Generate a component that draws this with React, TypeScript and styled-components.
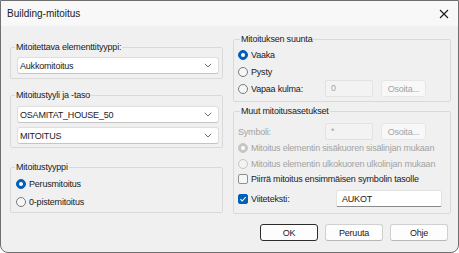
import styled, { createGlobalStyle } from 'styled-components';

const GlobalStyle = createGlobalStyle`
    html, body {
        margin: 0;
        padding: 0;
        background: #ffffff;
    }
    * {
        box-sizing: border-box;
    }
`;

const font = `'Liberation Sans', Arial, sans-serif`;

const Chevron = () => (
    <svg width="8" height="5" viewBox="0 0 8 5">
        <path d="M0.8 0.8 L4 4 L7.2 0.8" fill="none" stroke="#5f5f5f" strokeWidth="0.9" />
    </svg>
);

const CloseIcon = () => (
    <svg width="10" height="10" viewBox="0 0 10 10">
        <path d="M1 1 L9 9 M9 1 L1 9" stroke="#1a1a1a" strokeWidth="1.1" />
    </svg>
);

const CheckMark = () => (
    <svg width="8" height="8" viewBox="0 0 8 8">
        <path d="M1.4 4.2 L3.2 6 L6.8 2" fill="none" stroke="#ffffff" strokeWidth="1.1" />
    </svg>
);

const App = () => {
    return (
        <>
            <GlobalStyle />
            <Window>
                <TitleBar>
                    <Title>Building-mitoitus</Title>
                    <CloseButton>
                        <CloseIcon />
                    </CloseButton>
                </TitleBar>
                <Body>
                    <LeftColumn>
                        <Group $pt={3} $pb={4}>
                            <Legend>Mitoitettava elementtityyppi:</Legend>
                            <Combo>
                                <span>Aukkomitoitus</span>
                                <Chevron />
                            </Combo>
                        </Group>
                        <Group $pt={4} $pb={3} $mt={9}>
                            <Legend>Mitoitustyyli ja -taso</Legend>
                            <ComboStack>
                                <Combo>
                                    <span>OSAMITAT_HOUSE_50</span>
                                    <Chevron />
                                </Combo>
                                <Combo>
                                    <span>MITOITUS</span>
                                    <Chevron />
                                </Combo>
                            </ComboStack>
                        </Group>
                        <Group $pt={1} $pb={1} $mt={12}>
                            <Legend>Mitoitustyyppi</Legend>
                            <OptionRow $h={18} $indent={-1}>
                                <Radio $checked />
                                <OptionLabel>Perusmitoitus</OptionLabel>
                            </OptionRow>
                            <OptionRow $h={18} $indent={-1}>
                                <Radio />
                                <OptionLabel>0-pistemitoitus</OptionLabel>
                            </OptionRow>
                        </Group>
                    </LeftColumn>
                    <RightColumn>
                        <Group $pt={0} $pb={4} $pl={4}>
                            <Legend $ml={2}>Mitoituksen suunta</Legend>
                            <OptionRow $h={17}>
                                <Radio $checked />
                                <OptionLabel>Vaaka</OptionLabel>
                            </OptionRow>
                            <OptionRow $h={17}>
                                <Radio />
                                <OptionLabel>Pysty</OptionLabel>
                            </OptionRow>
                            <FieldRow>
                                <OptionRow $h={17}>
                                    <Radio />
                                    <OptionLabel>Vapaa kulma:</OptionLabel>
                                </OptionRow>
                                <TextBox $disabled>0</TextBox>
                                <PickButton>Osoita...</PickButton>
                            </FieldRow>
                        </Group>
                        <Group $pt={5} $pb={6} $pl={4} $mt={2}>
                            <Legend $ml={2}>Muut mitoitusasetukset</Legend>
                            <FieldRow>
                                <OptionLabel $disabled>Symboli:</OptionLabel>
                                <TextBox $disabled>*</TextBox>
                                <PickButton>Osoita...</PickButton>
                            </FieldRow>
                            <OptionRow $h={16}>
                                <Radio $checked $disabled />
                                <OptionLabel $disabled>
                                    Mitoitus elementin sisäkuoren sisälinjan mukaan
                                </OptionLabel>
                            </OptionRow>
                            <OptionRow $h={16}>
                                <Radio $disabled />
                                <OptionLabel $disabled>
                                    Mitoitus elementin ulkokuoren ulkolinjan mukaan
                                </OptionLabel>
                            </OptionRow>
                            <OptionRow $h={14}>
                                <CheckBox />
                                <OptionLabel>
                                    Piirrä mitoitus ensimmäisen symbolin tasolle
                                </OptionLabel>
                            </OptionRow>
                            <ReferenceRow>
                                <OptionRow $h={17}>
                                    <CheckBox $checked>
                                        <CheckMark />
                                    </CheckBox>
                                    <OptionLabel>Viiteteksti:</OptionLabel>
                                </OptionRow>
                                <TextBox $wide>AUKOT</TextBox>
                            </ReferenceRow>
                        </Group>
                        <ButtonRow>
                            <DialogButton $default>OK</DialogButton>
                            <DialogButton>Peruuta</DialogButton>
                            <DialogButton>Ohje</DialogButton>
                        </ButtonRow>
                    </RightColumn>
                </Body>
            </Window>
        </>
    );
};

export default App;

const Window = styled.div`
    width: 459px;
    height: 253px;
    display: flex;
    flex-direction: column;
    border: 1px solid #6f6f6f;
    border-radius: 0 0 8px 8px;
    overflow: hidden;
    background: #f0f0f0;
    font-family: ${font};
    color: #1a1a1a;
    letter-spacing: -0.2px;
`;

const TitleBar = styled.div`
    height: 25px;
    flex-shrink: 0;
    display: flex;
    align-items: center;
    justify-content: space-between;
    padding: 0 8px 0 6px;
    background: #f8f8f8;
`;

const Title = styled.span`
    font-size: 10px;
    line-height: 12px;
    letter-spacing: 0;
`;

const CloseButton = styled.span`
    display: flex;
    align-items: center;
    justify-content: center;
    width: 12px;
    height: 12px;
`;

const Body = styled.div`
    flex: 1;
    display: grid;
    grid-template-columns: 213px 218px;
    column-gap: 10px;
    padding: 6px 7px 0 9px;
`;

const LeftColumn = styled.div`
    display: flex;
    flex-direction: column;
    padding-top: 8px;
`;

const RightColumn = styled.div`
    display: flex;
    flex-direction: column;
`;

const Group = styled.fieldset<{ $pt: number; $pb: number; $pl?: number; $mt?: number }>`
    margin: ${({ $mt }) => $mt ?? 0}px 0 0 0;
    padding: ${({ $pt }) => $pt}px 3px ${({ $pb }) => $pb}px
        ${({ $pl }) => $pl ?? 6}px;
    border: 1px solid #d9d9d9;
    border-radius: 2px;
    min-width: 0;
`;

const Legend = styled.legend<{ $ml?: number }>`
    font-size: 9px;
    line-height: 14px;
    padding: 0 1px;
    margin-left: ${({ $ml }) => $ml ?? -2}px;
    color: #1a1a1a;
`;

const ComboStack = styled.div`
    display: flex;
    flex-direction: column;
    gap: 4px;
`;

const Combo = styled.div`
    height: 17px;
    display: flex;
    align-items: center;
    justify-content: space-between;
    padding: 0 6px 0 2px;
    background: #ffffff;
    border: 1px solid #dedede;
    border-bottom-color: #c4c4c4;
    border-radius: 3px;
    font-size: 9px;
`;

const OptionRow = styled.div<{ $h: number; $indent?: number }>`
    height: ${({ $h }) => $h}px;
    display: flex;
    align-items: center;
    gap: 3px;
    margin-left: ${({ $indent }) => $indent ?? 0}px;
`;

const OptionLabel = styled.span<{ $disabled?: boolean }>`
    font-size: 9px;
    white-space: nowrap;
    color: ${({ $disabled }) => ($disabled ? '#a3a3a3' : '#1a1a1a')};
`;

const Radio = styled.span<{ $checked?: boolean; $disabled?: boolean }>`
    position: relative;
    flex-shrink: 0;
    width: 10px;
    height: 10px;
    border-radius: 50%;
    border: 1px solid
        ${({ $checked, $disabled }) =>
            $disabled ? '#c6c6c6' : $checked ? '#005fb8' : '#7a7a7a'};
    background: ${({ $checked, $disabled }) =>
        $checked ? ($disabled ? '#c6c6c6' : '#005fb8') : $disabled ? '#f3f3f3' : '#f6f6f6'};

    &::after {
        content: '';
        display: ${({ $checked }) => ($checked ? 'block' : 'none')};
        position: absolute;
        left: 2px;
        top: 2px;
        width: 4px;
        height: 4px;
        border-radius: 50%;
        background: #ffffff;
    }
`;

const CheckBox = styled.span<{ $checked?: boolean }>`
    flex-shrink: 0;
    width: 10px;
    height: 10px;
    display: flex;
    align-items: center;
    justify-content: center;
    border-radius: 2px;
    border: 1px solid ${({ $checked }) => ($checked ? '#005fb8' : '#8f8f8f')};
    background: ${({ $checked }) => ($checked ? '#005fb8' : '#f6f6f6')};
`;

const FieldRow = styled.div`
    display: grid;
    grid-template-columns: 79px 48px 45px;
    column-gap: 8px;
    align-items: center;
    height: 17px;
`;

const ReferenceRow = styled.div`
    display: grid;
    grid-template-columns: 98px 106px;
    align-items: center;
    margin-top: 4px;
`;

const TextBox = styled.div<{ $disabled?: boolean; $wide?: boolean }>`
    height: 17px;
    display: flex;
    align-items: ${({ $disabled }) => ($disabled ? 'flex-start' : 'center')};
    padding: ${({ $disabled }) => ($disabled ? '2px 5px' : '0 5px')};
    font-size: 9px;
    border-radius: 2px;
    color: ${({ $disabled }) => ($disabled ? '#a3a3a3' : '#1a1a1a')};
    background: ${({ $disabled }) => ($disabled ? '#f3f3f3' : '#ffffff')};
    border: 1px solid ${({ $disabled }) => ($disabled ? '#e2e2e2' : '#e3e3e3')};
    border-bottom-color: ${({ $disabled }) => ($disabled ? '#e2e2e2' : '#8a8a8a')};
`;

const PickButton = styled.div`
    height: 17px;
    display: flex;
    align-items: center;
    justify-content: center;
    font-size: 9px;
    color: #a3a3a3;
    background: #f8f8f8;
    border: 1px solid #e6e6e6;
    border-radius: 3px;
`;

const ButtonRow = styled.div`
    display: flex;
    justify-content: flex-end;
    gap: 7px;
    margin-top: 10px;
    padding-right: 3px;
`;

const DialogButton = styled.div<{ $default?: boolean }>`
    width: 58px;
    height: 17px;
    display: flex;
    align-items: center;
    justify-content: center;
    font-size: 9px;
    background: #fdfdfd;
    border-radius: 3px;
    border: ${({ $default }) => ($default ? '1.5px solid #2c2c2c' : '1px solid #d0d0d0')};
    border-bottom-color: ${({ $default }) => ($default ? '#2c2c2c' : '#b8b8b8')};
`;
